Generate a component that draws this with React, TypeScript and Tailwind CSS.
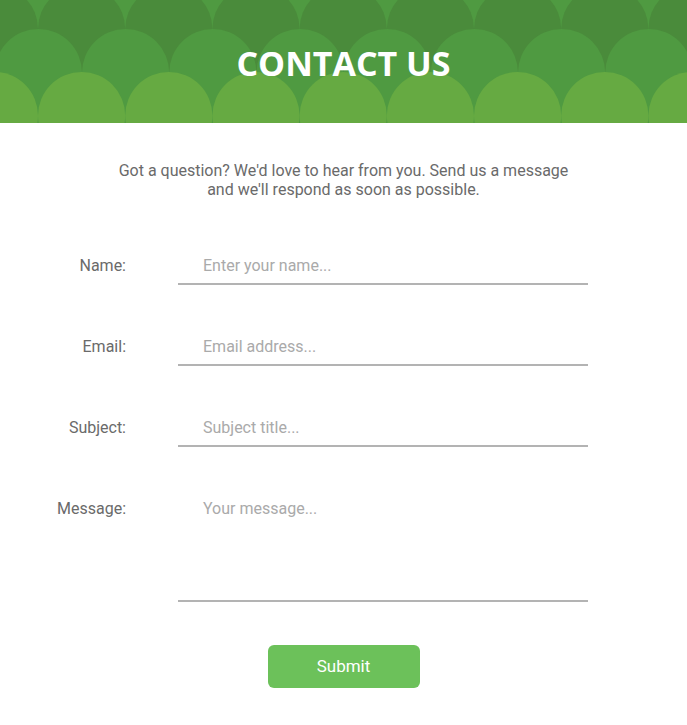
const STEP = 87.2
const R = 43.6

// one row of the scalloped header, circles placed edge to edge
function CircleRow({ cy, offset, fill }: { cy: number; offset: number; fill: string }) {
  const xs: number[] = []
  for (let x = offset - STEP; x < 687 + STEP; x += STEP) xs.push(x)
  return (
    <g fill={fill}>
      {xs.map((x) => (
        <circle key={x} cx={x} cy={cy} r={R} />
      ))}
    </g>
  )
}

function Field({ label, placeholder }: { label: string; placeholder: string }) {
  return (
    <div className="flex items-start">
      <label className="w-[126px] shrink-0 text-right text-[16px] leading-[19px] pt-[10px] text-[#6a6a6a]">
        {label}
      </label>
      <input
        type="text"
        placeholder={placeholder}
        className="ml-[52px] w-[410px] h-[39px] border-b-2 border-[#b3b3b3] pl-[25px] pt-[2px] text-[16px] text-[#555] placeholder:text-[#aaa] outline-none bg-transparent"
      />
    </div>
  )
}

export default function App() {
  return (
    <div className="w-[687px] min-h-[725px] bg-white font-['Roboto',sans-serif]">
      {/* Header */}
      <div className="relative h-[123px] overflow-hidden bg-[#4f9a41]">
        <svg className="absolute inset-0" width="687" height="123">
          <CircleRow cy={29} offset={81.6} fill="#4a8b3b" />
          <CircleRow cy={72.6} offset={38.4} fill="#4f9a41" />
          <CircleRow cy={115.6} offset={81.6} fill="#66aa42" />
        </svg>
        <h1 className="relative flex h-full items-center justify-center pt-[3px] font-['Open_Sans',sans-serif] text-[34px] font-bold text-white">
          CONTACT US
        </h1>
      </div>

      {/* Intro */}
      <p className="mt-[38px] text-center text-[16px] leading-[19px] text-[#6a6a6a]">
        Got a question? We'd love to hear from you. Send us a message
        <br />
        and we'll respond as soon as possible.
      </p>

      {/* Form */}
      <form className="mt-[47px] flex flex-col gap-[42px]" onSubmit={(e) => e.preventDefault()}>
        <Field label="Name:" placeholder="Enter your name..." />
        <Field label="Email:" placeholder="Email address..." />
        <Field label="Subject:" placeholder="Subject title..." />
        <div className="flex items-start">
          <label className="w-[126px] shrink-0 text-right text-[16px] leading-[19px] pt-[10px] text-[#6a6a6a]">
            Message:
          </label>
          <textarea
            placeholder="Your message..."
            className="ml-[52px] w-[410px] h-[113px] resize-none border-b-2 border-[#b3b3b3] pl-[25px] pt-[10px] text-[16px] leading-[19px] text-[#555] placeholder:text-[#aaa] outline-none bg-transparent"
          />
        </div>
        <div className="flex justify-center pt-[1px]">
          <button
            type="submit"
            className="w-[152px] h-[43px] rounded-[6px] bg-[#6cc15a] text-[17px] text-white"
          >
            Submit
          </button>
        </div>
      </form>
    </div>
  )
}
